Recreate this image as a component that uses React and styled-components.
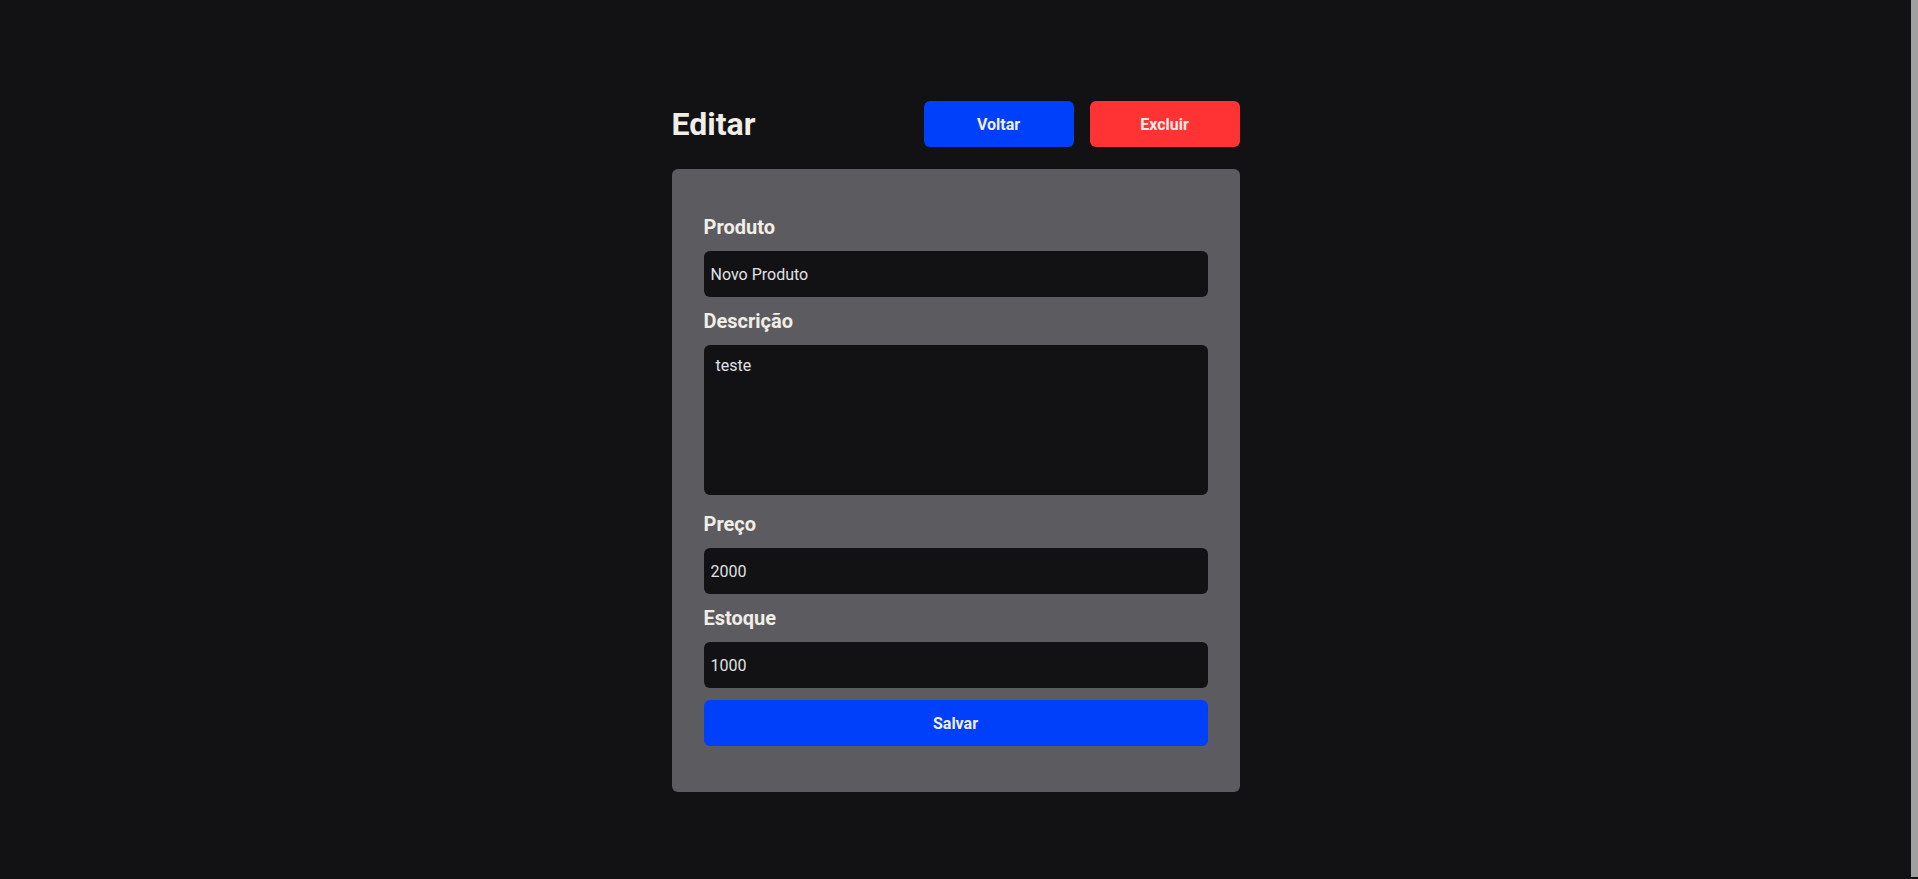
import React, { useState } from 'react';
import styled, { createGlobalStyle } from 'styled-components';

const GlobalStyle = createGlobalStyle`
    * {
        box-sizing: border-box;
        margin: 0;
        padding: 0;
    }

    html, body {
        background: #121214;
        overflow: hidden;
    }

    body {
        color: #f1ede7;
        font-family: Roboto, "Liberation Sans", sans-serif;
        -webkit-font-smoothing: antialiased;
    }
`;

const Shell = styled.div`
    display: grid;
    grid-template-columns: 1fr 7px;
    height: 100vh;
`;

const ScrollThumb = styled.div`
    background: #a0a0a0;
    margin-bottom: 2px;
`;

const Page = styled.main`
    padding-top: 101px;
    display: flex;
    justify-content: center;
`;

const Container = styled.div`
    width: 568px;
    height: fit-content;
    display: flex;
    flex-direction: column;
    gap: 22px;
`;

const Header = styled.header`
    display: flex;
    align-items: center;
    justify-content: space-between;

    & > h1 {
        font-size: 32px;
        font-weight: 700;
        color: #f1ede7;
    }
`;

const Actions = styled.div`
    display: flex;
    gap: 16px;
`;

const Button = styled.button`
    height: 46px;
    width: ${({ $full }) => ($full ? '100%' : '150px')};
    border: 0;
    border-radius: 6px;
    background: ${({ $danger }) => ($danger ? '#ff3333' : '#0040fa')};
    color: #f1ede7;
    font-family: inherit;
    font-size: 16px;
    font-weight: 700;
    cursor: pointer;
`;

const Card = styled.form`
    background: #5c5b60;
    border-radius: 6px;
    padding: 46px 32px 46px;
    display: flex;
    flex-direction: column;
    gap: 12px;
`;

const Label = styled.label`
    font-size: 20px;
    font-weight: 700;
    color: #f1ede7;
    line-height: normal;
`;

const Input = styled.input`
    height: 46px;
    width: 100%;
    border: 0;
    border-radius: 6px;
    background: #121214;
    color: #e1e1e6;
    font-family: inherit;
    font-size: 16px;
    padding: 0 7px;
    outline: none;
`;

const TextArea = styled.textarea`
    height: 150px;
    width: 100%;
    border: 0;
    border-radius: 6px;
    background: #121214;
    color: #e1e1e6;
    font-family: inherit;
    font-size: 16px;
    line-height: 1.2;
    padding: 11px 12px;
    margin-bottom: 5px;
    resize: none;
    outline: none;
`;

export default function App() {
    const [produto, setProduto] = useState('Novo Produto');
    const [descricao, setDescricao] = useState('teste');
    const [preco, setPreco] = useState('2000');
    const [estoque, setEstoque] = useState('1000');

    return (
        <>
            <GlobalStyle />
            <Shell>
                <Page>
                    <Container>
                        <Header>
                            <h1>Editar</h1>
                            <Actions>
                                <Button type="button">Voltar</Button>
                                <Button type="button" $danger>Excluir</Button>
                            </Actions>
                        </Header>
                        <Card onSubmit={(e) => e.preventDefault()}>
                            <Label htmlFor="produto">Produto</Label>
                            <Input id="produto" value={produto} onChange={(e) => setProduto(e.target.value)} />
                            <Label htmlFor="descricao">Descrição</Label>
                            <TextArea id="descricao" value={descricao} onChange={(e) => setDescricao(e.target.value)} />
                            <Label htmlFor="preco">Preço</Label>
                            <Input id="preco" value={preco} onChange={(e) => setPreco(e.target.value)} />
                            <Label htmlFor="estoque">Estoque</Label>
                            <Input id="estoque" value={estoque} onChange={(e) => setEstoque(e.target.value)} />
                            <Button type="submit" $full>Salvar</Button>
                        </Card>
                    </Container>
                </Page>
                <ScrollThumb />
            </Shell>
        </>
    );
}
